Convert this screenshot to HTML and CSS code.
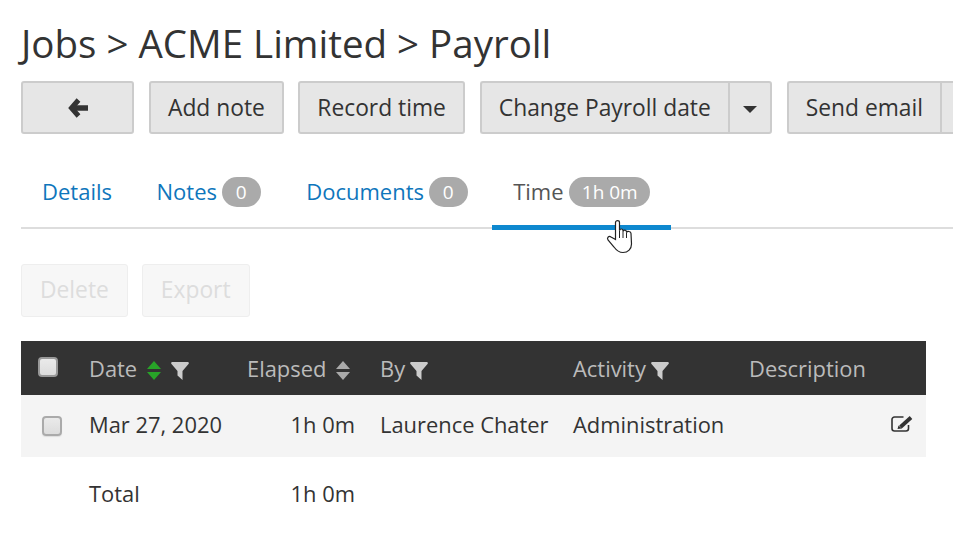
FILE: index.html
```html
<!DOCTYPE html>
<html lang="en">
<head>
	<meta charset="UTF-8">
	<title>Payroll</title>
	<link rel="stylesheet" href="styles.css">
</head>
<body>
	<h1 class="title">Jobs &gt; ACME Limited &gt; Payroll</h1>

	<div class="toolbar">
		<button class="btn btn-back">
			<svg class="arrow" width="21" height="22" viewBox="0 0 21 22"><path d="M10.500 3 L3.500 11 L10.500 19" fill="none" stroke="#333" stroke-width="5"/><path d="M5 11 H20" stroke="#333" stroke-width="5.500"/></svg>
		</button>
		<button class="btn">Add note</button>
		<button class="btn">Record time</button>
		<div class="split">
			<button class="btn btn-main">Change Payroll date</button>
			<button class="btn btn-caret"><span class="caret"></span></button>
		</div>
		<div class="split">
			<button class="btn btn-main">Send email</button>
			<button class="btn btn-caret"><span class="caret"></span></button>
		</div>
	</div>

	<div class="tabs">
		<a class="tab">Details</a>
		<a class="tab">Notes <span class="badge badge-count">0</span></a>
		<a class="tab">Documents <span class="badge badge-count">0</span></a>
		<a class="tab active">Time <span class="badge">1h 0m</span></a>
	</div>

	<div class="actions">
		<button class="btn-off">Delete</button>
		<button class="btn-off">Export</button>
	</div>

	<table class="grid">
		<colgroup>
			<col class="c-check">
			<col class="c-date">
			<col class="c-elapsed">
			<col class="c-by">
			<col class="c-activity">
			<col>
		</colgroup>
		<thead>
			<tr>
				<th><span class="check check-head"></span></th>
				<th>Date
					<svg class="sort" width="14" height="19" viewBox="0 0 14 19"><path d="M7 0 L14 8 L0 8 Z" fill="#28a428"/><path d="M7 19 L14 11 L0 11 Z" fill="#28a428"/></svg>
					<svg class="filter" width="18" height="18" viewBox="0 0 18 18"><path d="M1 0 H17 Q18.500 0.500 17.500 2 L11.500 9 V18 L6.500 13.500 V9 L0.500 2 Q-0.500 0.500 1 0 Z" fill="#ccc"/></svg>
				</th>
				<th>Elapsed
					<svg class="sort" width="14" height="19" viewBox="0 0 14 19"><path d="M7 0 L14 8 L0 8 Z" fill="#aaa"/><path d="M7 19 L14 11 L0 11 Z" fill="#aaa"/></svg>
				</th>
				<th>By <svg class="filter" width="18" height="18" viewBox="0 0 18 18"><path d="M1 0 H17 Q18.500 0.500 17.500 2 L11.500 9 V18 L6.500 13.500 V9 L0.500 2 Q-0.500 0.500 1 0 Z" fill="#ccc"/></svg></th>
				<th>Activity <svg class="filter" width="18" height="18" viewBox="0 0 18 18"><path d="M1 0 H17 Q18.500 0.500 17.500 2 L11.500 9 V18 L6.500 13.500 V9 L0.500 2 Q-0.500 0.500 1 0 Z" fill="#ccc"/></svg></th>
				<th>Description</th>
			</tr>
		</thead>
		<tbody>
			<tr class="row">
				<td><span class="check"></span></td>
				<td>Mar 27, 2020</td>
				<td class="num">1h 0m</td>
				<td>Laurence Chater</td>
				<td>Administration</td>
				<td class="edit">
					<svg width="22" height="18" viewBox="0 0 22 18"><path d="M17.500 10 V13.500 A2.500 2.500 0 0 1 15 16 H3.500 A2.500 2.500 0 0 1 1 13.500 V4.500 A2.500 2.500 0 0 1 3.500 2 H12.500" fill="none" stroke="#333" stroke-width="1.600"/><path d="M9.500 12 L20 2.500" stroke="#333" stroke-width="3.800"/><path d="M6.500 14 L7.500 10.500 L11 13.500 Z" fill="#333"/></svg>
				</td>
			</tr>
			<tr class="total">
				<td></td>
				<td>Total</td>
				<td class="num">1h 0m</td>
				<td></td>
				<td></td>
				<td></td>
			</tr>
		</tbody>
	</table>

	<svg class="cursor" width="27" height="35" viewBox="0 0 27 35"><path d="M9.500 20.500 V3.500 C9.500 1 13.500 1 13.500 3.500 V11.500 C14 9.500 17 9.500 17 11.500 V12.500 C17.500 10.500 20.500 10.500 20.500 13 V13.500 C21 12 25 12 25 14.500 L25.500 25 C25.500 30 22 33.500 17 33.500 C13 33.500 10.500 31.500 8 28 L2 21 C0.500 18.500 3 16.500 5 18 Z" fill="#fff" stroke="#222" stroke-width="1.200"/><path d="M13.500 11.500 V19 M17 12.500 V19 M20.500 13.500 V19" stroke="#222" stroke-width="1" fill="none"/></svg>
</body>
</html>
```

FILE: styles.css
```css
* {
	margin: 0;
	padding: 0;
	box-sizing: border-box;
}

html, body {
	overflow: hidden;
}

body {
	position: relative;
	width: 953px;
	height: 535px;
	padding: 19px 0 0 21px;
	background: #fff;
	color: #333;
	font-family: "Open Sans", sans-serif;
	font-size: 22px;
}

.title {
	font-size: 38.5px;
	font-weight: 400;
	line-height: 48px;
	white-space: nowrap;
}

.toolbar {
	display: flex;
	gap: 14.5px;
	width: 1000px;
	margin-top: 14px;
}

.btn {
	height: 53px;
	padding: 0 17px;
	border: 2px solid #ccc;
	border-radius: 3px;
	background: #e6e6e6;
	color: #333;
	font: inherit;
	font-size: 22.8px;
	white-space: nowrap;
}

.btn-back {
	width: 113px;
	margin-right: 0.5px;
	padding: 0;
}

.arrow {
	margin: 0 0 0 2px;
	vertical-align: -3px;
}

.split {
	display: flex;
	margin-left: 0.5px;
}

.btn-main {
	border-right: 0;
	border-radius: 3px 0 0 3px;
}

.btn-caret {
	width: 44px;
	padding: 0;
	border-radius: 0 3px 3px 0;
}

.caret {
	display: inline-block;
	vertical-align: middle;
	border-top: 7px solid #333;
	border-left: 7px solid transparent;
	border-right: 7px solid transparent;
}

.tabs {
	display: flex;
	gap: 2.5px;
	height: 95px;
	padding-top: 33px;
	border-bottom: 2px solid #ddd;
}

.tab {
	height: 62px;
	padding: 9px 21px 0;
	color: #0e76bc;
	white-space: nowrap;
}

.tab.active {
	height: 63px;
	border-bottom: 5px solid #0e88cf;
	color: #555;
}

.badge {
	display: inline-block;
	min-width: 39px;
	height: 30px;
	padding: 0 12.5px;
	border-radius: 15px;
	background: #aaa;
	color: #fff;
	font-size: 19px;
	line-height: 30px;
	text-align: center;
	vertical-align: 1px;
}

.badge-count {
	margin: 0 1px 0 -1px;
}

.actions {
	display: flex;
	gap: 14px;
	margin-top: 35px;
}

.btn-off {
	height: 53px;
	padding: 0 18px 3px;
	border: 1px solid #eee;
	border-radius: 3px;
	background: #f7f7f7;
	color: #ddd;
	font: inherit;
	font-size: 22.8px;
}

.grid {
	width: 905px;
	margin-top: 24px;
	border-collapse: collapse;
	table-layout: fixed;
	font-size: 21.9px;
}

.c-check { width: 68px; }
.c-date { width: 158px; }
.c-elapsed { width: 133px; }
.c-by { width: 193px; }
.c-activity { width: 176px; }

.grid th {
	height: 54px;
	background: #333;
	color: #bbb;
	font-weight: 400;
	text-align: left;
	white-space: nowrap;
}

.grid td {
	white-space: nowrap;
}

.row td {
	height: 62px;
	padding-bottom: 4px;
	background: #f4f4f4;
}

.total td {
	height: 74px;
	padding-bottom: 2px;
}

.num {
	padding-right: 25px;
	text-align: right;
}

.row .edit {
	padding: 0 13px 3px 0;
	text-align: right;
}

.sort, .filter {
	vertical-align: -3px;
}

.sort {
	margin: 0 5px 0 4px;
}

.filter {
	margin-left: -1px;
}

.check {
	display: block;
	width: 20px;
	height: 20px;
	margin-left: 21px;
	border: 2px solid #aaa;
	border-radius: 4px;
	background: linear-gradient(#eaeaea, #dcdcdc);
	box-shadow: 0 1px 1px #ddd;
}

.row .check {
	margin-top: 4px;
}

.check-head {
	margin-left: 17px;
	margin-top: -2px;
	border-color: #999;
	box-shadow: none;
}

.cursor {
	position: absolute;
	left: 606px;
	top: 219px;
}
```
